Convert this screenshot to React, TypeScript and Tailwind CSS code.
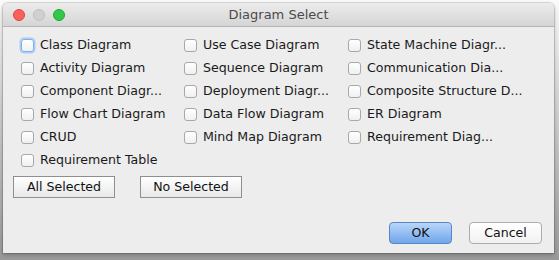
import React from "react";

const items: string[][] = [
  ["Class Diagram", "Use Case Diagram", "State Machine Diagr..."],
  ["Activity Diagram", "Sequence Diagram", "Communication Dia..."],
  ["Component Diagr...", "Deployment Diagr...", "Composite Structure D..."],
  ["Flow Chart Diagram", "Data Flow Diagram", "ER Diagram"],
  ["CRUD", "Mind Map Diagram", "Requirement Diag..."],
  ["Requirement Table", "", ""],
];

function Check({ label, focus }: { label: string; focus?: boolean }) {
  if (!label) return <div />;
  return (
    <div className="flex h-[23px] items-center">
      <div
        className={
          "h-[13px] w-[13px] rounded-[3px] border bg-gradient-to-b from-white to-[#f0f0f0] " +
          (focus
            ? "border-[#7fb0e8] shadow-[0_0_0_1.5px_#a9cdf5]"
            : "border-[#a8a8a8]")
        }
      />
      <span className="ml-[6px] text-[12.6px] text-[#1a1a1a]">{label}</span>
    </div>
  );
}

export default function App() {
  return (
    <div
      className="h-[260px] w-[559px] bg-gradient-to-b from-[#fafafa] to-[#9a9a9a] pl-[3px] pt-[3px]"
      style={{ fontFamily: '"DejaVu Sans", "Lucida Grande", sans-serif' }}
    >
      <div className="flex h-[250px] w-[551px] flex-col overflow-hidden rounded-t-[5px] bg-[#ededed] shadow-[0_0_0_1px_rgba(0,0,0,0.12),0_2px_4px_rgba(0,0,0,0.25)]">
        <div className="relative flex h-[24px] items-center border-b border-[#b5b5b5] bg-gradient-to-b from-[#ececec] to-[#d5d5d5]">
          <div className="flex gap-[8px] pl-[10px]">
            <div className="h-[12px] w-[12px] rounded-full border border-[#e0443e] bg-[#fc605c]" />
            <div className="h-[12px] w-[12px] rounded-full border border-[#c0c0c0] bg-[#d0d0d0]" />
            <div className="h-[12px] w-[12px] rounded-full border border-[#1aab29] bg-[#34c84a]" />
          </div>
          <div className="absolute inset-0 flex items-center justify-center text-[13px] text-[#4a4a4a]">
            Diagram Select
          </div>
        </div>
        <div className="grid grid-cols-[163px_164px_1fr] pl-[18px] pt-[7px]">
          {items.map((row, r) =>
            row.map((label, c) => (
              <Check key={r + "-" + c} label={label} focus={r === 0 && c === 0} />
            ))
          )}
        </div>
        <div className="mt-[4px] flex gap-[25px] pl-[10px]">
          <button className="h-[22px] w-[102px] border border-[#8f8f8f] bg-gradient-to-b from-white to-[#e8e8e8] text-[12.6px] text-[#111]">
            All Selected
          </button>
          <button className="h-[22px] w-[102px] border border-[#8f8f8f] bg-gradient-to-b from-white to-[#e8e8e8] text-[12.6px] text-[#111]">
            No Selected
          </button>
        </div>
        <div className="mt-[24px] flex justify-end gap-[17px] pr-[12px]">
          <button className="h-[22px] w-[63px] rounded-[4px] border border-[#5a86c4] bg-gradient-to-b from-[#b9d6f8] to-[#6fa6ec] text-[12.6px] text-[#111]">
            OK
          </button>
          <button className="h-[22px] w-[73px] rounded-[4px] border border-[#acacac] bg-gradient-to-b from-white to-[#f1f1f1] text-[12.6px] text-[#111]">
            Cancel
          </button>
        </div>
      </div>
    </div>
  );
}
